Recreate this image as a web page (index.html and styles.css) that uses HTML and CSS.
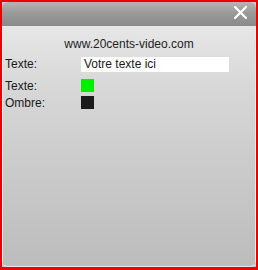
FILE: index.html
```html
<!DOCTYPE html>
<html>
<head>
<meta charset="utf-8">
<link rel="stylesheet" href="styles.css">
</head>
<body>
<div class="frame">
  <div class="panel">
    <div class="header">
      <svg class="close" width="13" height="13" viewBox="0 0 13 13"><path d="M1 1L12 12M12 1L1 12" stroke="#fff" stroke-width="2.2" stroke-linecap="round"/></svg>
    </div>
    <div class="body">
      <div class="site">www.20cents-video.com</div>
      <div class="row">
        <span class="label">Texte:</span>
        <span class="input">Votre texte ici</span>
      </div>
      <div class="row small">
        <span class="label">Texte:</span>
        <span class="swatch green"></span>
      </div>
      <div class="row small">
        <span class="label">Ombre:</span>
        <span class="swatch dark"></span>
      </div>
    </div>
  </div>
</div>
</body>
</html>
```
FILE: styles.css
```css
html, body {
  margin: 0;
  padding: 0;
  width: 258px;
  height: 270px;
  overflow: hidden;
}
.frame {
  box-sizing: border-box;
  width: 258px;
  height: 270px;
  border: 2px solid #ee0000;
  border-bottom-width: 3px;
  background: #c8c8c8;
}
.panel {
  box-sizing: border-box;
  height: 100%;
  display: flex;
  flex-direction: column;
  border-radius: 6px;
  overflow: hidden;
  background: linear-gradient(#ececec, #d6d6d6 35%, #bcbcbc 100%);
  border-bottom: 1px solid #e6e6e6;
  font-family: "Liberation Sans", Arial, sans-serif;
  font-size: 12px;
  color: #1a1a1a;
}
.header {
  height: 24px;
  flex: none;
  background: linear-gradient(#b4b4b4, #9a9a9a 45%, #8a8a8a);
  display: flex;
  justify-content: flex-end;
  align-items: center;
}
.close {
  margin-right: 9px;
  margin-top: -3px;
}
.body {
  flex: 1;
  border-left: 1px solid #f2f2f2;
  border-right: 1px solid #f2f2f2;
  padding: 11px 0 0 2px;
}
.site {
  text-align: center;
  margin-bottom: 5px;
  padding-right: 2px;
  color: #222;
}
.row {
  display: flex;
  align-items: center;
  height: 16px;
  margin-bottom: 5px;
}
.row.small {
  height: 17px;
  margin-bottom: 0;
}
.label {
  width: 76px;
  flex: none;
}
.input {
  background: #fff;
  width: 145px;
  height: 15px;
  line-height: 15px;
  padding-left: 3px;
}
.swatch {
  width: 13px;
  height: 13px;
}
.green { background: #00f000; }
.dark { background: #1c1c1c; }
```
